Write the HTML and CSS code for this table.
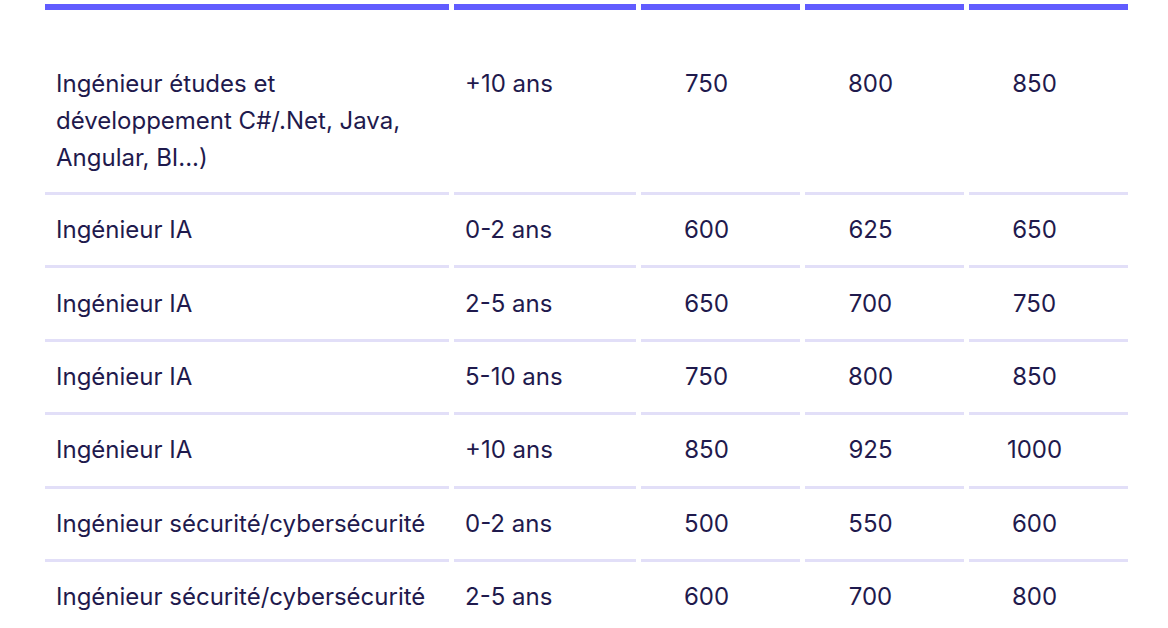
FILE: index.html
```html
<!DOCTYPE html>
<html lang="fr">
<head>
<meta charset="utf-8">
<link rel="stylesheet" href="styles.css">
</head>
<body>
<div class="wrap">
  <table class="rates">
    <colgroup>
      <col class="c-role"><col class="c-exp"><col class="c-num"><col class="c-num"><col class="c-num">
    </colgroup>
    <thead>
      <tr><th></th><th></th><th></th><th></th><th></th></tr>
    </thead>
    <tbody>
      <tr class="first">
        <td>Ingénieur études et développement C#/.Net, Java, Angular, BI...)</td>
        <td>+10 ans</td><td class="num">750</td><td class="num">800</td><td class="num">850</td>
      </tr>
      <tr><td>Ingénieur IA</td><td>0-2 ans</td><td class="num">600</td><td class="num">625</td><td class="num">650</td></tr>
      <tr><td>Ingénieur IA</td><td>2-5 ans</td><td class="num">650</td><td class="num">700</td><td class="num">750</td></tr>
      <tr><td>Ingénieur IA</td><td>5-10 ans</td><td class="num">750</td><td class="num">800</td><td class="num">850</td></tr>
      <tr><td>Ingénieur IA</td><td>+10 ans</td><td class="num">850</td><td class="num">925</td><td class="num">1000</td></tr>
      <tr><td>Ingénieur sécurité/cybersécurité</td><td>0-2 ans</td><td class="num">500</td><td class="num">550</td><td class="num">600</td></tr>
      <tr><td>Ingénieur sécurité/cybersécurité</td><td>2-5 ans</td><td class="num">600</td><td class="num">700</td><td class="num">800</td></tr>
    </tbody>
  </table>
</div>
</body>
</html>
```
FILE: styles.css
```css
html, body {
  margin: 0;
  padding: 0;
  background: #ffffff;
}
body {
  font-family: Inter, "Noto Sans", sans-serif;
  color: #1f1a4d;
}
.wrap {
  padding-left: 40px;
}
.rates {
  border-collapse: separate;
  border-spacing: 5px 0;
  table-layout: fixed;
  width: 1089px;
  font-size: 24px;
  line-height: 37px;
}
.c-role { width: 404px; }
.c-exp { width: 182px; }
.c-num { width: 159px; }
.rates th {
  height: 4px;
  padding: 0;
  border-bottom: 6px solid #615cff;
}
.rates td {
  padding: 16.2px 12px 17.2px 11px;
  border-bottom: 3px solid #e2dff8;
  vertical-align: top;
  text-align: left;
  font-weight: 400;
}
.rates td.num {
  text-align: center;
  padding-left: 12px;
  padding-right: 40px;
}
.rates tr.first td {
  padding-top: 55px;
  padding-bottom: 16px;
}
```
